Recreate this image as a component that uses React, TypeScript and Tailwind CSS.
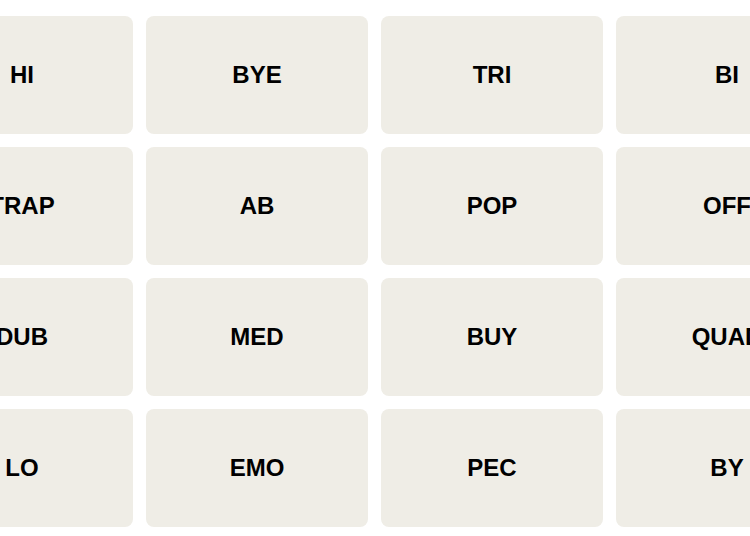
import React from "react";

const words = [
  "HI", "BYE", "TRI", "BI",
  "TRAP", "AB", "POP", "OFF",
  "DUB", "MED", "BUY", "QUAD",
  "LO", "EMO", "PEC", "BY",
];

export default function App() {
  return (
    <div className="w-[750px] h-[536px] bg-white overflow-hidden flex justify-center pt-[16px]">
      <div className="grid grid-cols-[repeat(4,222px)] auto-rows-[118px] gap-[13px] w-[927px] shrink-0 h-fit -ml-px">
        {words.map((w, i) => (
          <div
            key={i}
            className="bg-[#efede6] rounded-[8px] flex items-center justify-center text-black font-bold text-[24px] uppercase"
            style={{ fontFamily: '"Liberation Sans", Arial, sans-serif' }}
          >
            {w}
          </div>
        ))}
      </div>
    </div>
  );
}
